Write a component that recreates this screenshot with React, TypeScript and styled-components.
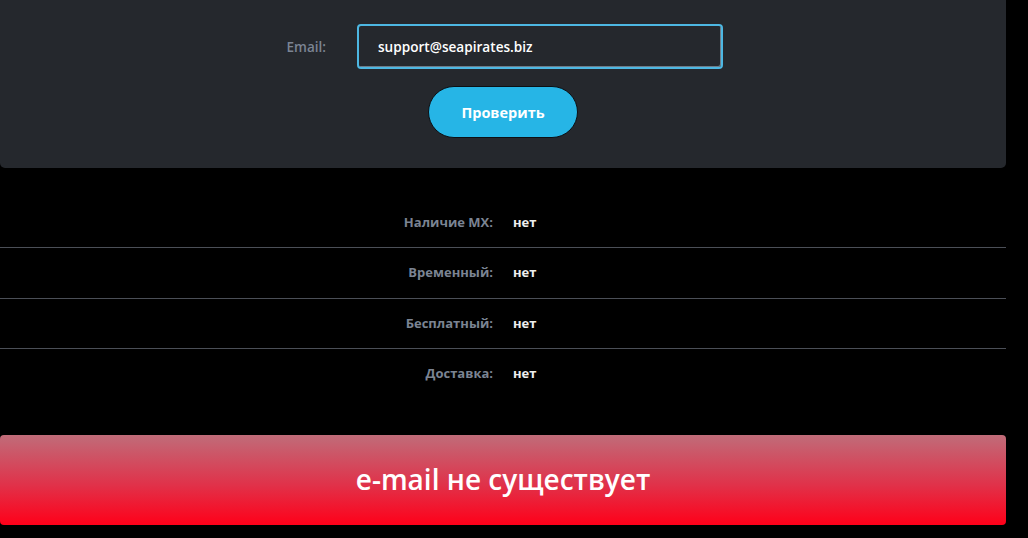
import React from "react";
import styled, { createGlobalStyle } from "styled-components";

const Global = createGlobalStyle`
  html, body { margin: 0; padding: 0; background: #000; }
  body { font-family: "Open Sans", "Liberation Sans", sans-serif; }
  * { box-sizing: border-box; }
`;

const Page = styled.div`
  width: 1006px;
  display: flex;
  flex-direction: column;
`;

const Panel = styled.section`
  background: #25282d;
  border-radius: 0 0 5px 5px;
  padding: 24px 0 30px;
  display: flex;
  flex-direction: column;
  align-items: center;
  gap: 17px;
`;

const FormRow = styled.div`
  display: grid;
  grid-template-columns: 42px 366px;
  column-gap: 31px;
  align-items: center;
  margin-left: 1px;
`;

const Label = styled.label`
  color: #7b8493;
  font-size: 13.5px;
  font-weight: 600;
  text-align: right;
  white-space: nowrap;
`;

const Input = styled.input`
  width: 366px;
  height: 45px;
  background: #25282d;
  border: 2px solid #4db7e2;
  border-radius: 4px;
  outline: none;
  padding: 0 0 1px 19px;
  color: #fff;
  font-family: "Open Sans", "Liberation Sans", sans-serif;
  font-size: 13.6px;
  font-weight: 600;
  box-shadow: inset -1px -1px 0 #6d7c88;
`;

const Button = styled.button`
  width: 150px;
  height: 52px;
  border-radius: 26px;
  background: #26b5e6;
  border: 1px solid #0c1014;
  color: #fff;
  font-family: "Open Sans", "Liberation Sans", sans-serif;
  font-size: 14.5px;
  font-weight: 700;
  cursor: pointer;
  padding-bottom: 1px;
`;

const Results = styled.div`
  margin-top: 29px;
  display: flex;
  flex-direction: column;
`;

const Row = styled.div<{ $h: number; $lift: number; $last?: boolean }>`
  height: ${(p) => p.$h}px;
  padding-bottom: ${(p) => p.$lift}px;
  display: grid;
  grid-template-columns: 1fr 1fr;
  column-gap: 20px;
  align-items: center;
  border-bottom: ${(p) => (p.$last ? "none" : "1px solid #4b4f57")};
  font-size: 13px;
  font-weight: 700;
`;

const RowLabel = styled.span`
  color: #7b8493;
  text-align: right;
`;

const RowValue = styled.span`
  color: #eeeeee;
`;

const Banner = styled.div`
  margin-top: 36px;
  height: 90px;
  border-radius: 4px;
  background: linear-gradient(to bottom, #c06c79 0%, #e0324a 55%, #ff0019 100%);
  display: flex;
  align-items: center;
  justify-content: center;
  color: #fff;
  font-size: 28px;
  font-weight: 600;
  padding-bottom: 3px;
`;

const rows: [string, string, number, number][] = [
  ["Наличие MX:", "нет", 51, 0],
  ["Временный:", "нет", 51, 2],
  ["Бесплатный:", "нет", 50, 2],
  ["Доставка:", "нет", 50, 2],
];

export default function App() {
  return (
    <>
      <Global />
      <Page>
        <Panel>
          <FormRow>
            <Label htmlFor="email">Email:</Label>
            <Input id="email" defaultValue="support@seapirates.biz" />
          </FormRow>
          <Button>Проверить</Button>
        </Panel>
        <Results>
          {rows.map(([l, v, h, lift], i) => (
            <Row key={l} $h={h} $lift={lift} $last={i === rows.length - 1}>
              <RowLabel>{l}</RowLabel>
              <RowValue>{v}</RowValue>
            </Row>
          ))}
        </Results>
        <Banner>e-mail не существует</Banner>
      </Page>
    </>
  );
}
